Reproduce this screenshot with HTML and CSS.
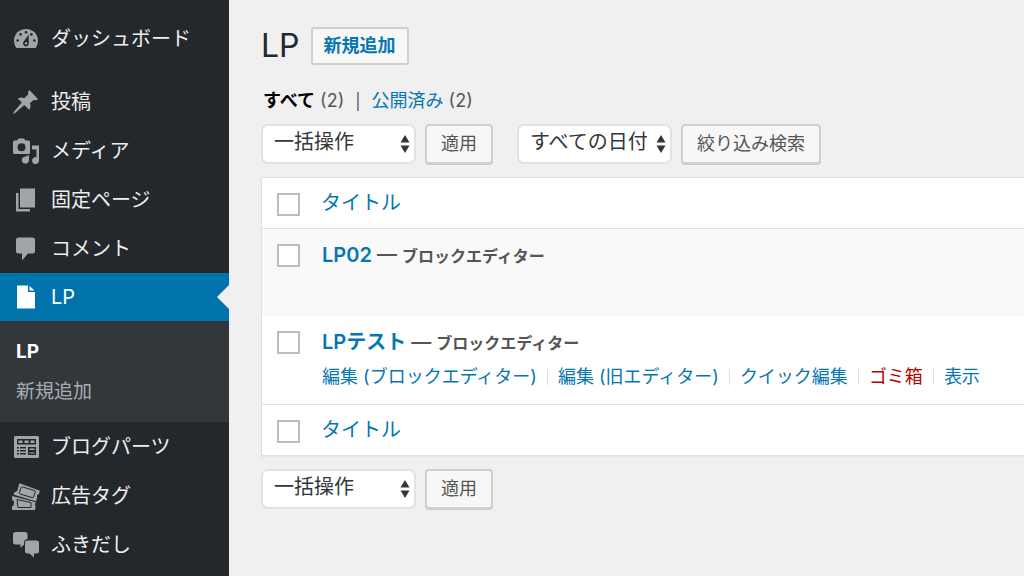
FILE: index.html
```html
<!DOCTYPE html>
<html lang="ja">
<head>
<meta charset="utf-8">
<meta name="viewport" content="width=device-width, initial-scale=1">
<title>LP</title>
<link rel="stylesheet" href="styles.css">
</head>
<body>
<div class="layout">
  <nav class="sidebar" aria-label="メインメニュー">
    <ul class="menu">
      <li class="menu-item menu-item--first">
        <a class="menu-link" href="#">
          <svg class="menu-icon" viewBox="0 0 28 28" aria-hidden="true">
            <path fill="currentColor" d="M4.500 23C3 21 2 18.500 2 15.500C2 9 7.400 4 14 4S26 9 26 15.500C26 18.500 25 21 23.500 23Z"/>
            <g fill="#23282d"><circle cx="14" cy="7.200" r="1.300"/><circle cx="8.600" cy="9.400" r="1.300"/><circle cx="19.400" cy="9.400" r="1.300"/><circle cx="5.700" cy="15.500" r="1.300"/><circle cx="22.300" cy="15.500" r="1.300"/><path d="M16.600 9.500L16.800 18.500A2.900 2.900 0 1 1 11.400 17Z"/></g>
            <circle cx="14" cy="18.300" r="1.200" fill="currentColor"/>
          </svg>
          <span>ダッシュボード</span>
        </a>
      </li>
      <li class="menu-item">
        <a class="menu-link" href="#">
          <svg class="menu-icon" viewBox="0 0 28 28" aria-hidden="true">
            <path fill="currentColor" d="M17.500 2L26 11.300C24.500 12.600 22.700 12.500 21.600 11.900L17.900 15.300C18.900 17.500 18.700 20 17.100 21.700L12.300 17L3.500 24.800L1 26L2.100 23.500L9.800 14.600L5.800 10.600C8 9.200 10.200 9.200 12.300 10.100L16.200 6.400C15.700 4.800 16.100 3.200 17.500 2Z"/>
          </svg>
          <span>投稿</span>
        </a>
      </li>
      <li class="menu-item">
        <a class="menu-link" href="#">
          <svg class="menu-icon" viewBox="0 0 28 28" aria-hidden="true">
            <path fill="currentColor" fill-rule="evenodd" d="M2.500 3.500H5L6.500 1.500H12L13.500 3.500H16.500Q18 3.500 18 5V15.500Q18 17 16.500 17H2.500Q1 17 1 15.500V5Q1 3.500 2.500 3.500ZM9.500 6.200A4 4 0 1 0 9.500 14.200A4 4 0 1 0 9.500 6.200Z"/>
            <path fill="currentColor" d="M20 8.500H27V23A3.500 3.500 0 1 1 24.500 20.200V12.500H20Z"/>
            <path fill="currentColor" d="M14.500 18.500H17V23A3.600 3.600 0 1 1 14.500 19.600Z"/>
          </svg>
          <span>メディア</span>
        </a>
      </li>
      <li class="menu-item">
        <a class="menu-link" href="#">
          <svg class="menu-icon" viewBox="0 0 28 28" aria-hidden="true">
            <path fill="currentColor" d="M8 2.500H23V21.500H8ZM4 7H6.500V23H18V25.500H4Z"/>
          </svg>
          <span>固定ページ</span>
        </a>
      </li>
      <li class="menu-item">
        <a class="menu-link" href="#">
          <svg class="menu-icon" viewBox="0 0 28 28" aria-hidden="true">
            <path fill="currentColor" d="M6.500 2.500H20.500Q23 2.500 23 5V16Q23 18.500 20.500 18.500H16L10 25.500V18.500H6.500Q4 18.500 4 16V5Q4 2.500 6.500 2.500Z"/>
          </svg>
          <span>コメント</span>
        </a>
      </li>
      <li class="menu-item menu-item--current">
        <a class="menu-link" href="#" aria-current="page">
          <svg class="menu-icon" viewBox="0 0 28 28" aria-hidden="true">
            <path fill="currentColor" d="M5 2.500H16V9H23V25.500H5ZM17.500 3L22.500 7.500H17.500Z"/>
          </svg>
          <span>LP</span>
        </a>
        <ul class="submenu">
          <li><a class="submenu-link submenu-link--current" href="#">LP</a></li>
          <li><a class="submenu-link" href="#">新規追加</a></li>
        </ul>
      </li>
      <li class="menu-item">
        <a class="menu-link" href="#">
          <svg class="menu-icon" viewBox="0 0 28 28" aria-hidden="true">
            <rect x="2" y="3" width="25" height="22" rx="1.500" fill="currentColor"/>
            <g fill="#23282d"><path d="M5 6H24V11.500H5ZM5 14H14V15.500H5ZM5 17H14V18.500H5ZM5 20H14V21.500H5ZM16 14H24V22H16Z"/></g>
            <path fill="currentColor" d="M6.500 7.500H10.500V10H6.500ZM12.500 7.500H16.500V10H12.500ZM18.500 7.500H22.500V10H18.500ZM17.500 15.500H22.500V17H17.500ZM17.500 19.500H22.500V20.500H17.500ZM7 14H8V22H7Z"/>
          </svg>
          <span>ブログパーツ</span>
        </a>
      </li>
      <li class="menu-item">
        <a class="menu-link" href="#">
          <svg class="menu-icon" viewBox="0 0 28 28" aria-hidden="true">
            <path fill="currentColor" d="M0 14L24 20Q22 22 23.500 24L23 28H0V24.500Q2.500 23 2 20Q1.500 18 0 17.500Z"/>
            <path fill="none" stroke="#23282d" stroke-width="1" d="M5 17.500L19 20.500V25.500H6Z"/>
            <path fill="currentColor" stroke="#23282d" stroke-width="1" d="M7 .500L28.500 8.500L27.500 12Q24.500 12.500 25.500 16L24.500 20L1 13L2 10Q5.500 9.500 5.500 6.500Z"/>
            <path fill="none" stroke="#23282d" stroke-width="1" d="M9 5.500Q9.500 4.500 10.500 5L22.500 8.500Q23.500 9 23.200 10L21.500 15Q21 16 20 15.500L8 12Q7 11.500 7.500 10.500Z"/>
          </svg>
          <span>広告タグ</span>
        </a>
      </li>
      <li class="menu-item">
        <a class="menu-link" href="#">
          <svg class="menu-icon" viewBox="0 0 28 28" aria-hidden="true">
            <path fill="currentColor" d="M3.500 1H13Q15.500 1 15.500 3.500V8Q12 8.500 12 12V13.500L8.500 17V13.500H3.500Q1 13.500 1 11V3.500Q1 1 3.500 1Z"/>
            <path fill="currentColor" d="M15.500 9.500H24.500Q27 9.500 27 12V20Q27 22.500 24.500 22.500H22V26.500L17.500 22.500H15.500Q13 22.500 13 20V12Q13 9.500 15.500 9.500Z"/>
          </svg>
          <span>ふきだし</span>
        </a>
      </li>
    </ul>
  </nav>

  <main class="content">
    <header class="page-header">
      <h1 class="page-title">LP</h1>
      <a class="add-new" href="#">新規追加</a>
    </header>

    <ul class="views">
      <li><a class="view-link view-link--current" href="#">すべて</a> <span>(2)</span></li>
      <li class="view-divider" aria-hidden="true">|</li>
      <li><a class="view-link" href="#">公開済み</a> <span>(2)</span></li>
    </ul>

    <div class="toolbar">
      <div class="toolbar-group">
        <div class="select-box">
          <select class="select" aria-label="一括操作を選択"><option>一括操作</option></select>
          <svg class="select-arrows" viewBox="0 0 10 18" aria-hidden="true"><path fill="currentColor" d="M5 0L9.500 7.500H.500ZM5 18L.500 10.500H9.500Z"/></svg>
        </div>
        <button class="button" type="button">適用</button>
      </div>
      <div class="toolbar-group">
        <div class="select-box">
          <select class="select select--date" aria-label="日付で絞り込む"><option>すべての日付</option></select>
          <svg class="select-arrows" viewBox="0 0 10 18" aria-hidden="true"><path fill="currentColor" d="M5 0L9.500 7.500H.500ZM5 18L.500 10.500H9.500Z"/></svg>
        </div>
        <button class="button" type="button">絞り込み検索</button>
      </div>
    </div>

    <table class="posts">
      <thead>
        <tr>
          <td class="check-cell"><input class="checkbox" type="checkbox" aria-label="すべて選択"></td>
          <th class="title-cell" scope="col"><a class="sort-link" href="#">タイトル</a></th>
        </tr>
      </thead>
      <tbody>
        <tr class="post post--alternate">
          <td class="check-cell"><input class="checkbox" type="checkbox" aria-label="LP02を選択"></td>
          <td class="title-cell">
            <div class="post-title"><a class="post-link" href="#">LP02</a> — <span class="post-state">ブロックエディター</span></div>
          </td>
        </tr>
        <tr class="post">
          <td class="check-cell"><input class="checkbox" type="checkbox" aria-label="LPテストを選択"></td>
          <td class="title-cell">
            <div class="post-title"><a class="post-link" href="#">LPテスト</a> — <span class="post-state">ブロックエディター</span></div>
            <ul class="row-actions">
              <li><a class="action" href="#">編集 (ブロックエディター)</a></li>
              <li><a class="action" href="#">編集 (旧エディター)</a></li>
              <li><a class="action" href="#">クイック編集</a></li>
              <li><a class="action action--trash" href="#">ゴミ箱</a></li>
              <li><a class="action" href="#">表示</a></li>
            </ul>
          </td>
        </tr>
      </tbody>
      <tfoot>
        <tr>
          <td class="check-cell"><input class="checkbox" type="checkbox" aria-label="すべて選択"></td>
          <th class="title-cell" scope="col"><a class="sort-link" href="#">タイトル</a></th>
        </tr>
      </tfoot>
    </table>

    <div class="toolbar toolbar--bottom">
      <div class="toolbar-group">
        <div class="select-box">
          <select class="select" aria-label="一括操作を選択"><option>一括操作</option></select>
          <svg class="select-arrows" viewBox="0 0 10 18" aria-hidden="true"><path fill="currentColor" d="M5 0L9.500 7.500H.500ZM5 18L.500 10.500H9.500Z"/></svg>
        </div>
        <button class="button" type="button">適用</button>
      </div>
    </div>
  </main>
</div>
</body>
</html>
```
FILE: styles.css
```css
*,
*::before,
*::after {
  box-sizing: border-box;
}

body {
  margin: 0;
  background: #f0f0f0;
  color: #555;
  font-family: Inter, "Noto Sans CJK JP", sans-serif;
  font-size: 18px;
  line-height: 28px;
}

ul {
  margin: 0;
  padding: 0;
  list-style: none;
}

a {
  color: #0676b2;
  text-decoration: none;
}

.layout {
  display: flex;
  min-height: 100vh;
}

/* Sidebar */
.sidebar {
  flex: none;
  width: 229px;
  padding-top: 14px;
  background: #23282d;
}

.menu-item--first {
  margin-bottom: 14px;
}

.menu-link {
  display: flex;
  align-items: center;
  gap: 11px;
  height: 49px;
  padding-left: 12px;
  color: #eee;
  font-size: 20px;
}

.menu-icon {
  flex: none;
  width: 28px;
  height: 28px;
  color: #a0a5aa;
}

.menu-item--current .menu-link {
  position: relative;
  height: 48px;
  background: #0073aa;
  color: #fff;
}

.menu-item--current .menu-link::after {
  content: "";
  position: absolute;
  top: 12px;
  right: 0;
  border: 12px solid transparent;
  border-left-width: 0;
  border-right-color: #f0f0f0;
}

.menu-item--current .menu-icon {
  color: #fff;
}

.submenu {
  padding: 11px 0 10px;
  background: #32373c;
}

.submenu-link {
  display: block;
  padding: 6px 16px;
  color: #a8adb2;
  font-size: 19px;
}

.submenu-link--current {
  color: #fff;
  font-weight: 700;
}

/* Page heading */
.content {
  flex: 1;
  min-width: 0;
  padding: 27px 0 40px 32px;
}

.page-header {
  display: flex;
  align-items: center;
  gap: 11px;
}

.page-title {
  margin: 0;
  color: #23282d;
  font-size: 32px;
  font-weight: 400;
  line-height: 38px;
}

.add-new {
  padding: 3px 11px;
  border: 2px solid #d0d0d0;
  border-radius: 3px;
  background: #f7f7f7;
  font-weight: 700;
}

.views {
  display: flex;
  gap: 11px;
  margin-top: 22px;
  padding-left: 2px;
}

.view-link--current {
  color: #000;
  font-weight: 700;
}

.view-divider {
  font-size: 16px;
}

/* Toolbars */
.toolbar {
  display: flex;
  gap: 24px;
  margin-top: 9px;
}

.toolbar--bottom {
  margin-top: 13px;
}

.toolbar-group {
  display: flex;
  gap: 9px;
}

.select-box {
  position: relative;
}

.select {
  appearance: none;
  height: 40px;
  margin: 0;
  padding: 0 60px 4px 11px;
  border: 2px solid #e2e2e2;
  border-radius: 7px;
  background: #fff;
  color: #32373c;
  font: inherit;
  font-size: 20px;
}

.select--date {
  padding-right: 20px;
}

.select-arrows {
  position: absolute;
  top: 11px;
  right: 6px;
  width: 10px;
  height: 18px;
  color: #32373c;
  pointer-events: none;
}

.button {
  height: 40px;
  padding: 0 14px;
  border: 2px solid #d0d0d0;
  border-radius: 4px;
  background: #f7f7f7;
  box-shadow: 0 1px 0 #ccc;
  color: #555;
  font: inherit;
}

/* Posts table */
.posts {
  width: 100%;
  margin-top: 13px;
  border: 1px solid #e1e1e1;
  border-right: 0;
  border-spacing: 0;
  background: #fff;
  box-shadow: 0 1px 1px #e5e5e5;
}

.posts td,
.posts th {
  padding: 0;
  text-align: left;
  vertical-align: top;
}

.posts thead td,
.posts thead th {
  border-bottom: 1px solid #e1e1e1;
}

.posts tfoot td,
.posts tfoot th {
  border-top: 1px solid #e1e1e1;
}

.posts .check-cell {
  width: 59px;
  padding: 15px 0 0 15px;
}

.posts .title-cell {
  padding: 11px 8px 11px 0;
}

.posts .post .title-cell {
  height: 87px;
  padding: 12px 8px 13px 1px;
}

.post--alternate {
  background: #f9f9f9;
}

.checkbox {
  appearance: none;
  display: block;
  width: 23px;
  height: 23px;
  margin: 0;
  border: 2px solid #b8bdc2;
  background: #fff;
}

.sort-link {
  display: block;
  font-size: 20px;
  font-weight: 400;
}

.post-title {
  font-size: 20px;
  font-weight: 600;
}

.post-state {
  font-size: 16px;
}

.row-actions {
  display: flex;
  gap: 10px;
  margin-top: 6px;
  white-space: nowrap;
}

.row-actions li {
  display: flex;
  align-items: center;
  gap: 10px;
}

.row-actions li + li::before {
  content: "";
  width: 1px;
  height: 16px;
  background: #ddd;
}

.action--trash {
  color: #b80000;
}
```
